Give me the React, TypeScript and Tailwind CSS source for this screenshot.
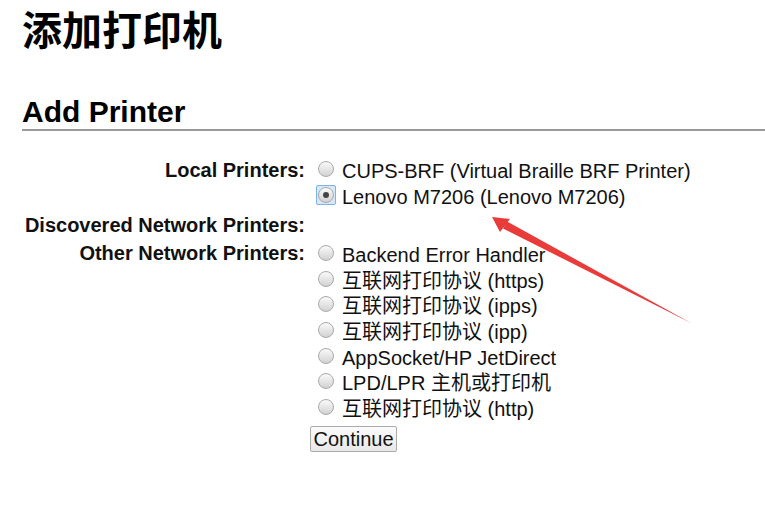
import React from "react";

const LATIN = "font-['Liberation_Sans','Noto_Sans_CJK_SC',sans-serif]";

function Radio({ checked = false }: { checked?: boolean }) {
  const dot = (
    <span className="flex h-[16px] w-[16px] items-center justify-center rounded-full border border-[#aaaaaa] bg-gradient-to-b from-[#fafafa] to-[#d2d2d2]">
      {checked && <span className="h-[6px] w-[6px] rounded-full bg-[#444]" />}
    </span>
  );
  if (checked) {
    return (
      <span className="flex h-[20px] w-[20px] items-center justify-center rounded-[2px] border border-[#7fb2e5] bg-[#d6e8fa] -mx-[2px]">
        {dot}
      </span>
    );
  }
  return dot;
}

function Option({ label, checked }: { label: string; checked?: boolean }) {
  return (
    <div className="flex h-full items-center gap-[8px] pl-[13px]">
      <Radio checked={checked} />
      <span className="mt-[5px] text-[20px] leading-[23px] text-[#111] whitespace-nowrap">{label}</span>
    </div>
  );
}

function Label({ children }: { children?: React.ReactNode }) {
  return (
    <div className="flex h-full items-center justify-end pt-[2px] text-[20px] leading-[23px] font-bold text-[#111] whitespace-nowrap">
      {children}
    </div>
  );
}

const other = [
  "Backend Error Handler",
  "互联网打印协议 (https)",
  "互联网打印协议 (ipps)",
  "互联网打印协议 (ipp)",
  "AppSocket/HP JetDirect",
  "LPD/LPR 主机或打印机",
  "互联网打印协议 (http)",
];

export default function App() {
  return (
    <div className={`relative h-[508px] w-[765px] overflow-hidden bg-white ${LATIN}`}>
      <div className="pl-[22px]">
        <h1 className="pt-[8px] text-[40px] leading-[40px] font-bold text-black font-['Noto_Sans_CJK_SC',sans-serif]">
          添加打印机
        </h1>
        <h2 className="mt-[49px] border-b-2 border-[#9a989a] pb-[2px] text-[30px] leading-[30px] font-bold text-black">
          Add Printer
        </h2>

        <div className="mt-[25px] grid grid-cols-[283px_1fr]">
          <div className="h-[26px]"><Label>Local Printers:</Label></div>
          <div className="h-[26px]"><Option label="CUPS-BRF (Virtual Braille BRF Printer)" /></div>
          <div className="h-[26px]" />
          <div className="h-[26px]"><Option label="Lenovo M7206 (Lenovo M7206)" checked /></div>

          <div className="h-[32px]"><Label>Discovered Network Printers:</Label></div>
          <div className="h-[32px]" />

          {other.map((o, i) => (
            <React.Fragment key={o}>
              <div className="h-[25.7px]">{i === 0 && <Label>Other Network Printers:</Label>}</div>
              <div className="h-[25.7px]"><Option label={o} /></div>
            </React.Fragment>
          ))}

          <div />
          <div className="pt-[6px] pl-[5px]">
            <button className="h-[26px] w-[87px] rounded-[2px] border border-[#ababab] bg-gradient-to-b from-[#fbfbfb] to-[#e8e8e8] text-[20px] leading-[22px] text-[#111]">
              Continue
            </button>
          </div>
        </div>
      </div>

      <svg className="pointer-events-none absolute left-0 top-0" width="765" height="508" viewBox="0 0 765 508">
        <polygon points="492,217 510,219 500,232" fill="#ea3b3b" />
        <polygon points="507,221.5 503,228.5 692,323.5" fill="#ea3b3b" />
      </svg>
    </div>
  );
}
